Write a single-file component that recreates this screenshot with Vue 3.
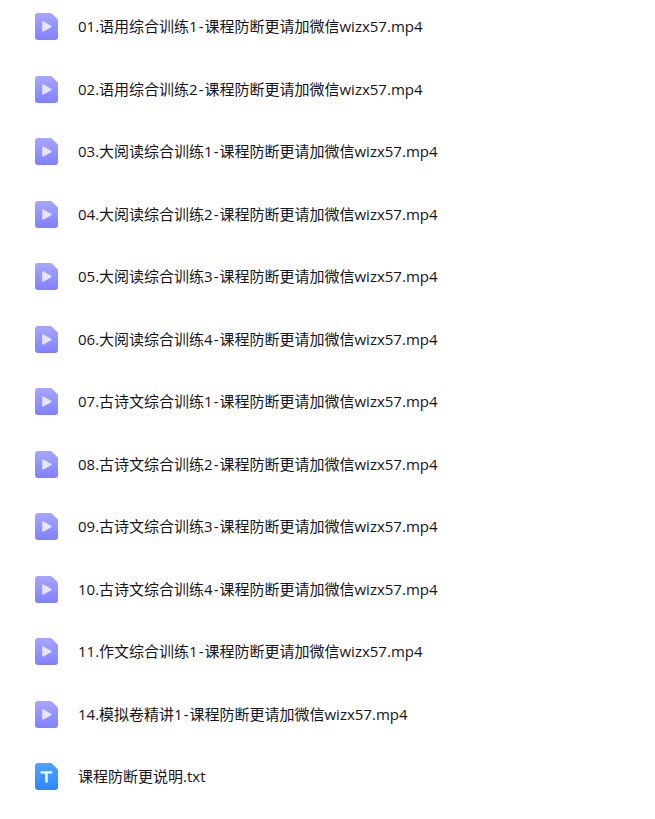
<template>
  <ul class="file-list">
    <li class="file-row" v-for="file in files" :key="file.title">
      <svg v-if="file.type === 'video'" class="file-icon" viewBox="0 0 23 27" aria-hidden="true">
        <defs>
          <linearGradient id="video-grad" x1="0" y1="0" x2="0" y2="1">
            <stop offset="0" stop-color="#a6a6ff" />
            <stop offset="1" stop-color="#8080ff" />
          </linearGradient>
        </defs>
        <path d="M3 0H15.5a2 2 0 0 1 1.4.6L22.4 6.1a2 2 0 0 1 .6 1.4V24a3 3 0 0 1-3 3H3a3 3 0 0 1-3-3V3a3 3 0 0 1 3-3Z" fill="url(#video-grad)" />
        <path d="M7.2 9.2c0-.8.8-1.2 1.4-.8l7.6 4.3c.6.4.6 1.2 0 1.6l-7.6 4.3c-.6.4-1.4 0-1.4-.8Z" fill="#e4e4ff" />
      </svg>
      <svg v-else class="file-icon" viewBox="0 0 23 27" aria-hidden="true">
        <defs>
          <linearGradient id="text-grad" x1="0" y1="0" x2="0" y2="1">
            <stop offset="0" stop-color="#4da3ff" />
            <stop offset="1" stop-color="#2f86ff" />
          </linearGradient>
        </defs>
        <path d="M3 0H15.5a2 2 0 0 1 1.4.6L22.4 6.1a2 2 0 0 1 .6 1.4V24a3 3 0 0 1-3 3H3a3 3 0 0 1-3-3V3a3 3 0 0 1 3-3Z" fill="url(#text-grad)" />
        <path d="M5.5 8.3H17.3V10.6H12.7V19.5H10.1V10.6H5.5Z" fill="#f2f8ff" />
      </svg>
      <span class="file-name">{{ file.title }}<span v-if="file.type === 'video'" class="dash">-</span>{{ file.rest }}</span>
    </li>
  </ul>
</template>

<script setup>
const rest = '课程防断更请加微信wizx57.mp4'

const files = [
  '01.语用综合训练1',
  '02.语用综合训练2',
  '03.大阅读综合训练1',
  '04.大阅读综合训练2',
  '05.大阅读综合训练3',
  '06.大阅读综合训练4',
  '07.古诗文综合训练1',
  '08.古诗文综合训练2',
  '09.古诗文综合训练3',
  '10.古诗文综合训练4',
  '11.作文综合训练1',
  '14.模拟卷精讲1',
].map((title) => ({ title, rest, type: 'video' }))

files.push({ title: '课程防断更说明.txt', rest: '', type: 'text' })
</script>

<style scoped>
.file-list {
  list-style: none;
  margin: 0;
  padding: 13px 0 0 34.5px;
  display: flex;
  flex-direction: column;
  gap: 35.5px;
  background: #fff;
}

.file-row {
  display: flex;
  align-items: center;
  gap: 20.5px;
  height: 27px;
}

.file-icon {
  width: 23px;
  height: 27px;
  flex: none;
}

.file-name {
  font-family: "Open Sans", "Noto Sans CJK SC", sans-serif;
  font-size: 15px;
  color: #14141c;
  white-space: nowrap;
  padding-bottom: 2px;
}

.dash {
  margin: 0 1px;
}
</style>
